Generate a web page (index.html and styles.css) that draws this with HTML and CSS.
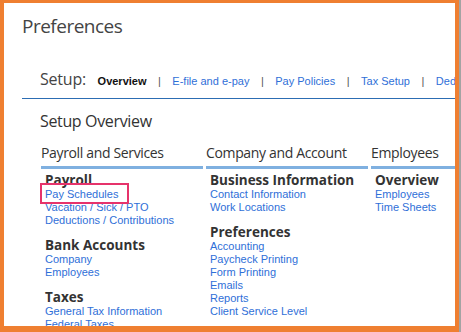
FILE: index.html
```html
<!DOCTYPE html>
<html lang="en">
<head>
    <meta charset="UTF-8">
    <meta name="viewport" content="width=device-width, initial-scale=1.0">
    <title>Preferences</title>
    <link rel="stylesheet" href="styles.css">
</head>
<body>
    <div class="frame">
        <h1 class="page-title">Preferences</h1>

        <div class="tabs">
            <span class="tabs-label">Setup:</span>
            <span class="tab current">Overview</span>
            <span class="sep">|</span>
            <a class="tab" href="#">E-file and e-pay</a>
            <span class="sep">|</span>
            <a class="tab" href="#">Pay Policies</a>
            <span class="sep">|</span>
            <a class="tab" href="#">Tax Setup</a>
            <span class="sep">|</span>
            <a class="tab" href="#">Deductions</a>
        </div>

        <h2 class="overview-title">Setup Overview</h2>

        <div class="columns">
            <div class="col">
                <h3 class="col-head">Payroll and Services</h3>
                <div class="group">
                    <h4>Payroll</h4>
                    <a class="highlight" href="#">Pay Schedules</a>
                    <a href="#">Vacation / Sick / PTO</a>
                    <a href="#">Deductions / Contributions</a>
                </div>
                <div class="group">
                    <h4>Bank Accounts</h4>
                    <a href="#">Company</a>
                    <a href="#">Employees</a>
                </div>
                <div class="group">
                    <h4>Taxes</h4>
                    <a href="#">General Tax Information</a>
                    <a href="#">Federal Taxes</a>
                    <a href="#">State Taxes</a>
                </div>
            </div>

            <div class="col">
                <h3 class="col-head">Company and Account</h3>
                <div class="group">
                    <h4>Business Information</h4>
                    <a href="#">Contact Information</a>
                    <a href="#">Work Locations</a>
                </div>
                <div class="group">
                    <h4>Preferences</h4>
                    <a href="#">Accounting</a>
                    <a href="#">Paycheck Printing</a>
                    <a href="#">Form Printing</a>
                    <a href="#">Emails</a>
                    <a href="#">Reports</a>
                    <a href="#">Client Service Level</a>
                </div>
            </div>

            <div class="col">
                <h3 class="col-head">Employees</h3>
                <div class="group">
                    <h4>Overview</h4>
                    <a href="#">Employees</a>
                    <a href="#">Time Sheets</a>
                </div>
            </div>
        </div>
    </div>
</body>
</html>
```

FILE: styles.css
```css
* {
    margin: 0;
    padding: 0;
    box-sizing: border-box;
}

body {
    background-color: #a3a3a3; /* gray strip on the right edge */
    font-family: "Liberation Sans", Arial, sans-serif;
    height: 332px;
    overflow: hidden;
}

/* orange annotation frame around the screenshot */
.frame {
    width: 459px;
    height: 332px;
    background-color: white;
    border-style: solid;
    border-color: #ef7f31;
    border-width: 3px 4px 6px 4px;
    overflow: hidden;
    padding: 11px 0 0 18px;
}

.page-title {
    font-family: "Open Sans", sans-serif;
    font-weight: normal;
    font-size: 19px;
    letter-spacing: -0.5px;
    line-height: 24px;
    color: #444;
}

.tabs {
    display: flex;
    align-items: baseline;
    gap: 11.5px;
    white-space: nowrap;
    width: 500px;
    margin-top: 30px;
    padding: 0 0 8px 18px;
    border-bottom: 1px solid #2c6db3;
}

.tabs-label {
    font-family: "Open Sans", sans-serif;
    font-size: 16px;
    letter-spacing: -0.2px;
    color: #444;
}

.tab {
    font-size: 11px;
    color: #2f6fd8;
    text-decoration: none;
}

.tab.current {
    color: #111;
    font-weight: bold;
}

.sep {
    font-size: 11px;
    color: #555;
}

.overview-title {
    font-family: "Open Sans", sans-serif;
    font-weight: normal;
    font-size: 16px;
    letter-spacing: -0.35px;
    line-height: 20px;
    color: #333;
    margin: 12px 0 0 18px;
}

.columns {
    display: grid;
    grid-template-columns: 162px 162px 162px;
    gap: 3px;
    margin: 12px 0 0 19px;
}

.col-head {
    font-family: "Open Sans", sans-serif;
    font-weight: normal;
    font-size: 14px;
    letter-spacing: -0.35px;
    line-height: 20px;
    color: #333;
    padding-bottom: 3px;
    border-bottom: 3px solid #7fb0e0;
    white-space: nowrap;
}

.group {
    display: flex;
    flex-direction: column;
    align-items: flex-start;
    padding-left: 4px;
    margin-top: 3px;
    margin-bottom: 10px;
}

.group h4 {
    font-family: "Open Sans", sans-serif;
    font-weight: bold;
    font-size: 13.5px;
    line-height: 16px;
    color: #333;
}

.group a {
    font-size: 11px;
    line-height: 13px;
    color: #2f6fd8;
    text-decoration: none;
    white-space: nowrap;
}

/* pink box drawn around the link being pointed at */
.group a.highlight {
    position: relative;
}

.group a.highlight::after {
    content: "";
    position: absolute;
    top: -5px;
    bottom: -3px;
    left: -5px;
    right: -11px;
    border: 2px solid #e6336b;
}
```
